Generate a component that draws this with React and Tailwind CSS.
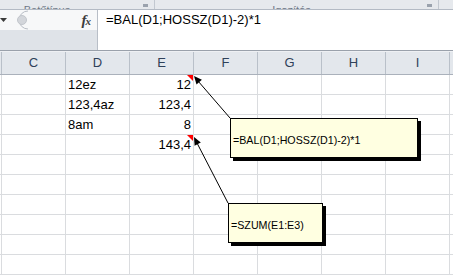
const cols = ['C', 'D', 'E', 'F', 'G', 'H', 'I'];

const data = [
    { d: '12ez', e: '12', note: true },
    { d: '123,4az', e: '123,4' },
    { d: '8am', e: '8' },
    { d: '', e: '143,4', note: true },
    {}, {}, {}, {}, {}, {}
];

const NoteMark = () => (
    <span className="absolute top-0 right-0 w-0 h-0 border-t-[6px] border-t-[#ff0000] border-l-[6px] border-l-transparent"></span>
);

const Arrows = () => (
    <svg className="absolute inset-0 pointer-events-none" width="453" height="278">
        <line x1="230" y1="118" x2="198" y2="81" stroke="#000" strokeWidth="1" />
        <polygon points="194,76 196.5,84.4 201.9,79.8" fill="#000" />
        <line x1="228" y1="203" x2="197" y2="143" stroke="#000" strokeWidth="1" />
        <polygon points="194,137 194.6,145.7 200.8,142.5" fill="#000" />
    </svg>
);

const App = () => {
    return (
        <div className="relative w-[453px] h-[278px] overflow-hidden bg-white font-['Liberation_Sans',sans-serif] text-black">
            {/* ribbon bottom edge */}
            <div className="flex h-[10px] bg-[#e6e9ed] border-b border-[#b3bac4]">
                <div className="w-[155px] h-full flex items-end justify-center overflow-hidden relative border-r border-[#c2c8d0]">
                    <span className="text-[11px] leading-[11px] mb-[-7px] text-[#6e7886] mr-[60px]">Betűtípus</span>
                    <span className="absolute right-[6px] bottom-[2px] w-[5px] h-[3px] bg-[#9aa2ad]"></span>
                </div>
                <div className="w-[284px] h-full flex items-end justify-center overflow-hidden relative border-r border-[#c2c8d0]">
                    <span className="text-[11px] leading-[11px] mb-[-7px] text-[#6e7886] mr-[10px]">Igazítás</span>
                    <span className="absolute right-[6px] bottom-[2px] w-[5px] h-[3px] bg-[#9aa2ad]"></span>
                </div>
                <div className="flex-1 bg-[#e6e9ed]"></div>
            </div>

            {/* formula bar */}
            <div className="flex h-[40px]">
                <div className="w-[98px] flex flex-col border-r border-[#b8bec7]">
                    <div className="h-[20px] bg-[#f7f8f9] flex items-center">
                        <svg width="8" height="6" className="ml-[0px]">
                            <polygon points="0,1 7,1 3.5,5" fill="#3a3a3a" />
                        </svg>
                        <svg width="16" height="20" className="ml-[5px]">
                            <path d="M15 1 A 9 9 0 0 0 15 19" fill="none" stroke="#b9bec6" strokeWidth="1" />
                            <circle cx="9" cy="10" r="4.5" fill="#d3d6db" stroke="#c2c6cc" />
                        </svg>
                        <span className="ml-auto mr-[7px] font-['Liberation_Serif',serif] italic text-[15px] leading-[20px] text-[#3c3c3c] font-bold tracking-[-1px]">
                            f<span className="text-[11px]">x</span>
                        </span>
                    </div>
                    <div className="flex-1 bg-[#dfe3e8]"></div>
                </div>
                <div className="flex-1 bg-white pl-[8px] text-[13px] leading-[20px]">
                    =BAL(D1;HOSSZ(D1)-2)*1
                </div>
            </div>

            {/* separator */}
            <div className="h-[2px] border-t border-[#9aa1ab] bg-[#eef0f3]"></div>

            {/* column headers */}
            <div className="flex h-[23px] bg-[#e3e7ec] border-b border-[#aab1bb]">
                <div className="w-[2px] border-r border-[#b9c0c9]"></div>
                {cols.map((c) => (
                    <div
                        key={c}
                        className="w-[64px] shrink-0 border-r border-[#b9c0c9] flex items-center justify-center text-[13px] text-[#2f4159]">
                        {c}
                    </div>
                ))}
                <div className="flex-1"></div>
            </div>

            {/* rows */}
            {data.map((row, i) => (
                <div key={i} className="flex h-[20px] border-b border-[#dadcdf]">
                    <div className="w-[2px] border-r border-[#dadcdf]"></div>
                    <div className="w-[64px] shrink-0 border-r border-[#dadcdf]"></div>
                    <div className="w-[64px] shrink-0 border-r border-[#dadcdf] pl-[2px] pt-[1px] text-[13px] leading-[18px]">
                        {row.d}
                    </div>
                    <div className="relative w-[64px] shrink-0 border-r border-[#dadcdf] pr-[2px] pt-[1px] text-right text-[13px] leading-[18px]">
                        {row.e}
                        {row.note && <NoteMark />}
                    </div>
                    {['F', 'G', 'H', 'I'].map((c) => (
                        <div key={c} className="w-[64px] shrink-0 border-r border-[#dadcdf]"></div>
                    ))}
                    <div className="flex-1"></div>
                </div>
            ))}

            <Arrows />

            {/* comments */}
            <div className="absolute left-[230px] top-[118px] w-[188px] h-[40px] bg-[#ffffe1] border border-black shadow-[3px_3px_0_#000] pl-[2px] pt-[14px] text-[10.7px] leading-[14px]">
                =BAL(D1;HOSSZ(D1)-2)*1
            </div>
            <div className="absolute left-[228px] top-[203px] w-[95px] h-[40px] bg-[#ffffe1] border border-black shadow-[3px_3px_0_#000] pl-[2px] pt-[14px] text-[10.7px] leading-[14px]">
                =SZUM(E1:E3)
            </div>
        </div>
    );
};

export default App;
